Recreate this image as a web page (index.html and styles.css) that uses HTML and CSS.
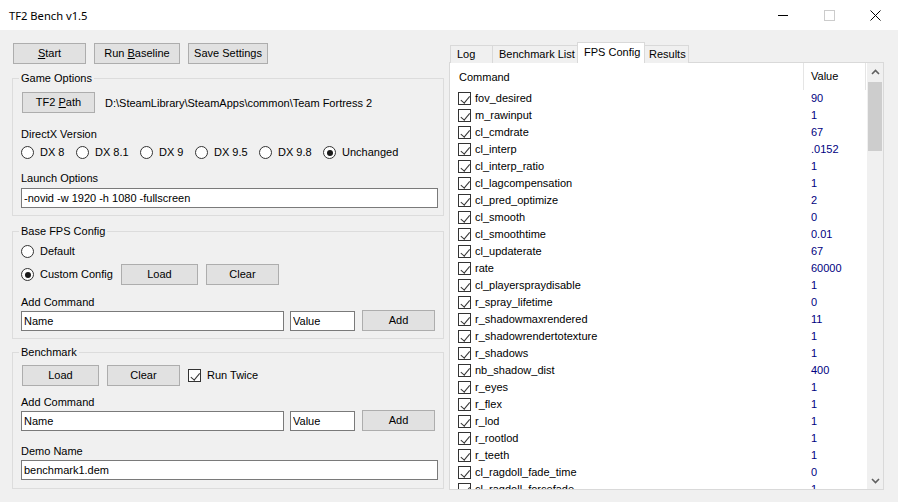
FILE: index.html
```html
<!DOCTYPE html>
<html>
<head>
<meta charset="utf-8">
<title>TF2 Bench v1.5</title>
<link rel="stylesheet" href="styles.css">
</head>
<body>
<div class="titlebar">
  <span class="title">TF2 Bench v1.5</span>
  <div class="controls">
    <span class="ctl"><svg width="10" height="10" viewBox="0 0 10 10"><path d="M0 5.5H10" stroke="#000" stroke-width="1"/></svg></span>
    <span class="ctl"><svg width="11" height="11" viewBox="0 0 11 11"><rect x="0.5" y="0.5" width="10" height="10" fill="none" stroke="#ccc" stroke-width="1"/></svg></span>
    <span class="ctl"><svg width="11" height="11" viewBox="0 0 11 11"><path d="M0.5 0.5L10.5 10.5M10.5 0.5L0.5 10.5" stroke="#000" stroke-width="1"/></svg></span>
  </div>
</div>
<div class="main">
  <div class="left">
    <div class="toolbar">
      <button class="btn w-start"><u>S</u>tart</button>
      <button class="btn w-run">Run <u>B</u>aseline</button>
      <button class="btn w-save">Save Settings</button>
    </div>

    <fieldset class="group game">
      <legend>Game Options</legend>
      <div class="row-path">
        <button class="btn w-path">TF2 <u>P</u>ath</button>
        <span>D:\SteamLibrary\SteamApps\common\Team Fortress 2</span>
      </div>
      <div class="lbl mt15">DirectX Version</div>
      <div class="radios">
        <label class="opt"><span class="rb"></span>DX 8</label>
        <label class="opt"><span class="rb"></span>DX 8.1</label>
        <label class="opt"><span class="rb"></span>DX 9</label>
        <label class="opt"><span class="rb"></span>DX 9.5</label>
        <label class="opt"><span class="rb"></span>DX 9.8</label>
        <label class="opt"><span class="rb on"></span>Unchanged</label>
      </div>
      <div class="lbl mt13">Launch Options</div>
      <input class="txt full mt3" type="text" value="-novid -w 1920 -h 1080 -fullscreen">
    </fieldset>

    <fieldset class="group base">
      <legend>Base FPS Config</legend>
      <label class="opt single mt7"><span class="rb"></span>Default</label>
      <div class="row-btns mt6">
        <label class="opt w-custom"><span class="rb on"></span>Custom Config</label>
        <button class="btn w-load1">Load</button>
        <button class="btn w-clear">Clear</button>
      </div>
      <div class="lbl mt11">Add Command</div>
      <div class="row-add mt1">
        <input class="txt w-name" type="text" value="Name">
        <input class="txt w-value" type="text" value="Value">
        <button class="btn w-add">Add</button>
      </div>
    </fieldset>

    <fieldset class="group bench">
      <legend>Benchmark</legend>
      <div class="row-btns bench-btns mt6">
        <button class="btn w-load2">Load</button>
        <button class="btn w-clear">Clear</button>
        <label class="opt"><span class="cb"></span>Run Twice</label>
      </div>
      <div class="lbl mt10">Add Command</div>
      <div class="row-add mt1">
        <input class="txt w-name" type="text" value="Name">
        <input class="txt w-value" type="text" value="Value">
        <button class="btn w-add">Add</button>
      </div>
      <div class="lbl mt14">Demo Name</div>
      <input class="txt full mt2" type="text" value="benchmark1.dem">
    </fieldset>
  </div>

  <div class="right">
    <div class="tabs">
      <span class="tab t-log">Log</span>
      <span class="tab t-bl">Benchmark List</span>
      <span class="tab t-fps active">FPS Config</span>
      <span class="tab t-res">Results</span>
    </div>
    <div class="panel">
      <div class="listview">
        <div class="lv-body">
          <div class="lv-head">
            <span class="col-cmd">Command</span>
            <span class="col-val">Value</span>
          </div>
          <div class="lv-row"><span class="col-cmd"><span class="cb"></span>fov_desired</span><span class="col-val">90</span></div>
          <div class="lv-row"><span class="col-cmd"><span class="cb"></span>m_rawinput</span><span class="col-val">1</span></div>
          <div class="lv-row"><span class="col-cmd"><span class="cb"></span>cl_cmdrate</span><span class="col-val">67</span></div>
          <div class="lv-row"><span class="col-cmd"><span class="cb"></span>cl_interp</span><span class="col-val">.0152</span></div>
          <div class="lv-row"><span class="col-cmd"><span class="cb"></span>cl_interp_ratio</span><span class="col-val">1</span></div>
          <div class="lv-row"><span class="col-cmd"><span class="cb"></span>cl_lagcompensation</span><span class="col-val">1</span></div>
          <div class="lv-row"><span class="col-cmd"><span class="cb"></span>cl_pred_optimize</span><span class="col-val">2</span></div>
          <div class="lv-row"><span class="col-cmd"><span class="cb"></span>cl_smooth</span><span class="col-val">0</span></div>
          <div class="lv-row"><span class="col-cmd"><span class="cb"></span>cl_smoothtime</span><span class="col-val">0.01</span></div>
          <div class="lv-row"><span class="col-cmd"><span class="cb"></span>cl_updaterate</span><span class="col-val">67</span></div>
          <div class="lv-row"><span class="col-cmd"><span class="cb"></span>rate</span><span class="col-val">60000</span></div>
          <div class="lv-row"><span class="col-cmd"><span class="cb"></span>cl_playerspraydisable</span><span class="col-val">1</span></div>
          <div class="lv-row"><span class="col-cmd"><span class="cb"></span>r_spray_lifetime</span><span class="col-val">0</span></div>
          <div class="lv-row"><span class="col-cmd"><span class="cb"></span>r_shadowmaxrendered</span><span class="col-val">11</span></div>
          <div class="lv-row"><span class="col-cmd"><span class="cb"></span>r_shadowrendertotexture</span><span class="col-val">1</span></div>
          <div class="lv-row"><span class="col-cmd"><span class="cb"></span>r_shadows</span><span class="col-val">1</span></div>
          <div class="lv-row"><span class="col-cmd"><span class="cb"></span>nb_shadow_dist</span><span class="col-val">400</span></div>
          <div class="lv-row"><span class="col-cmd"><span class="cb"></span>r_eyes</span><span class="col-val">1</span></div>
          <div class="lv-row"><span class="col-cmd"><span class="cb"></span>r_flex</span><span class="col-val">1</span></div>
          <div class="lv-row"><span class="col-cmd"><span class="cb"></span>r_lod</span><span class="col-val">1</span></div>
          <div class="lv-row"><span class="col-cmd"><span class="cb"></span>r_rootlod</span><span class="col-val">1</span></div>
          <div class="lv-row"><span class="col-cmd"><span class="cb"></span>r_teeth</span><span class="col-val">1</span></div>
          <div class="lv-row"><span class="col-cmd"><span class="cb"></span>cl_ragdoll_fade_time</span><span class="col-val">0</span></div>
          <div class="lv-row"><span class="col-cmd"><span class="cb"></span>cl_ragdoll_forcefade</span><span class="col-val">1</span></div>
        </div>
        <div class="scrollbar">
          <span class="sb-btn"><svg width="9" height="6" viewBox="0 0 9 6"><path d="M1 5L4.5 1.5L8 5" fill="none" stroke="#606060" stroke-width="1.6"/></svg></span>
          <div class="sb-track"><div class="sb-thumb"></div></div>
          <span class="sb-btn"><svg width="9" height="6" viewBox="0 0 9 6"><path d="M1 1L4.5 4.5L8 1" fill="none" stroke="#606060" stroke-width="1.6"/></svg></span>
        </div>
      </div>
    </div>
  </div>
</div>
</body>
</html>
```

FILE: styles.css
```css
* { box-sizing: border-box; }
html, body { margin: 0; padding: 0; }
body {
  width: 898px;
  height: 502px;
  overflow: hidden;
  background: #f0f0f0;
  font-family: "Liberation Sans", Arial, sans-serif;
  font-size: 11px;
  color: #000;
}

/* title bar */
.titlebar {
  height: 30px;
  background: #fff;
  display: flex;
  align-items: center;
  justify-content: space-between;
}
.title {
  font-family: "Noto Sans", "Segoe UI", sans-serif;
  font-size: 11.2px;
  padding-left: 9px;
}
.controls { display: flex; height: 30px; }
.ctl {
  width: 46px;
  height: 30px;
  display: flex;
  align-items: center;
  justify-content: center;
}

/* layout */
.main { display: flex; gap: 5px; padding-left: 12px; }
.left { width: 432px; padding-top: 13px; }
.right { width: 435px; padding-top: 12px; }

/* buttons */
.btn {
  font: inherit;
  color: #000;
  height: 21px;
  background: #e1e1e1;
  border: 1px solid #adadad;
  border-radius: 0;
  padding: 0;
  line-height: 19px;
  text-align: center;
}
.toolbar { display: flex; gap: 8px; padding-left: 1px; height: 21px; }
.w-start { width: 73px; }
.w-run { width: 86px; }
.w-save { width: 80px; }
.w-path { width: 73px; }
.w-load1 { width: 77px; }
.w-load2 { width: 77px; }
.w-clear { width: 73px; }
.w-add { width: 73px; }

/* group boxes */
.group {
  margin: 0;
  min-width: 0;
  border: 1px solid #dcdcdc;
  padding: 0 5px 7px 8px;
}
.group legend {
  padding: 0 2px;
  margin-left: -2px;
  height: 14px;
  line-height: 14px;
}
.game { margin-top: 7px; }
.base { margin-top: 8px; }
.bench { margin-top: 6px; padding-bottom: 8px; }

.lbl { height: 13px; line-height: 13px; }
.mt1 { margin-top: 1px; }
.mt2 { margin-top: 2px; }
.mt3 { margin-top: 3px; }
.mt6 { margin-top: 6px; }
.mt7 { margin-top: 7px; }
.mt10 { margin-top: 10px; }
.mt11 { margin-top: 11px; }
.mt13 { margin-top: 13px; }
.mt14 { margin-top: 14px; }
.mt15 { margin-top: 15px; }

.row-path {
  margin-top: 7px;
  display: flex;
  align-items: center;
  gap: 10px;
  height: 21px;
  padding-left: 1px;
}

/* radio / checkbox */
.opt {
  display: flex;
  align-items: center;
  gap: 6px;
  height: 13px;
  line-height: 13px;
  white-space: nowrap;
}
.rb {
  width: 13px;
  height: 13px;
  border: 1px solid #333;
  border-radius: 50%;
  background: #fff;
  position: relative;
  flex: none;
}
.rb.on::after {
  content: "";
  position: absolute;
  left: 2.5px;
  top: 2.5px;
  width: 6px;
  height: 6px;
  border-radius: 50%;
  background: #1a1a1a;
}
.cb {
  width: 13px;
  height: 13px;
  border: 1px solid #333;
  background: #fff;
  position: relative;
  flex: none;
}
.cb::after {
  content: "";
  position: absolute;
  left: 3.5px;
  top: 0.5px;
  width: 3.5px;
  height: 7.5px;
  border-right: 1.2px solid #333;
  border-bottom: 1.2px solid #333;
  transform: rotate(40deg);
}

.radios {
  margin-top: 5px;
  display: grid;
  grid-template-columns: 55px 64px 55px 64px 64px auto;
  height: 13px;
}

.row-btns { display: flex; align-items: center; height: 21px; }
.w-custom { width: 100px; }
.row-btns .w-clear { margin-left: 8px; }
.bench-btns { padding-left: 1px; gap: 8px; }
.bench-btns .w-clear { margin-left: 0; }

/* inputs */
.txt {
  font: inherit;
  color: #000;
  height: 20px;
  border: 1px solid #7a7a7a;
  background: #fff;
  padding: 0 2px;
  border-radius: 0;
  outline: none;
  display: block;
}
.full { width: 417px; }
.row-add { display: flex; align-items: center; height: 21px; }
.w-name { width: 263px; }
.w-value { width: 65px; margin-left: 6px; }
.row-add .w-add { margin-left: 7px; }

/* tabs */
.tabs {
  display: flex;
  align-items: flex-end;
  height: 21px;
  padding-left: 1px;
  position: relative;
  z-index: 2;
}
.tab {
  height: 18px;
  line-height: 17px;
  border: 1px solid #d9d9d9;
  border-bottom: none;
  background: #f0f0f0;
  padding-left: 6px;
  margin-left: -1px;
  white-space: nowrap;
}
.tab:first-child { margin-left: 0; }
.t-log { width: 43px; }
.t-bl { width: 86px; }
.t-fps { width: 68px; }
.t-res { width: 45px; padding-left: 4px; }
.tab.active {
  height: 21px;
  line-height: 18px;
  background: #fff;
  position: relative;
  z-index: 3;
}

.panel {
  margin-top: -1px;
  height: 428px;
  border: 1px solid #d9d9d9;
  background: #fff;
  position: relative;
  z-index: 1;
}

/* list view */
.listview { display: flex; height: 100%; }
.lv-body { flex: 1; overflow: hidden; }
.lv-head {
  display: flex;
  height: 27px;
  line-height: 26px;
}
.lv-head .col-cmd { border-right: 1px solid #e5e5e5; padding-left: 9px; }
.lv-head .col-val { border-right: 1px solid #e5e5e5; }
.col-cmd { width: 354px; padding-left: 8px; display: flex; align-items: center; gap: 4px; }
.col-val { width: 62px; padding-left: 7px; }
.lv-row {
  display: flex;
  height: 17px;
  line-height: 17px;
}
.lv-row .col-val { color: #000080; }

.scrollbar {
  width: 16px;
  background: #f0f0f0;
  display: flex;
  flex-direction: column;
}
.sb-btn {
  height: 17px;
  display: flex;
  align-items: center;
  justify-content: center;
  flex: none;
}
.sb-track { flex: 1; }
.sb-thumb {
  margin: 2px 1px 0;
  height: 69px;
  background: #cdcdcd;
}
```
